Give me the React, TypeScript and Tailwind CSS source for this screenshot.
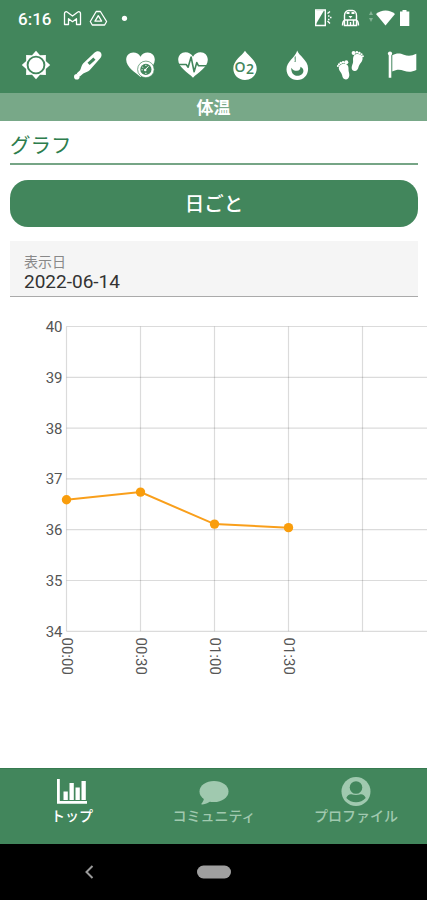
import React from 'react';

const GREEN = '#42865c';

const SunIcon = () => (
  <svg viewBox="0 0 32 32" className="h-8 w-8" fill="white">
    <path d="M16 1.800l4 4.400 5.900-.1-.1 5.900 4.400 4-4.400 4 .1 5.900-5.900-.1-4 4.400-4-4.400-5.900.1.100-5.900-4.400-4 4.400-4-.1-5.900 5.900.1z" />
    <circle cx="16" cy="16" r="8.400" stroke={GREEN} strokeWidth="1.900" />
  </svg>
);

const ThermometerIcon = () => (
  <svg viewBox="0 0 32 32" className="h-8 w-8" fill="none">
    <path d="M22.1 3.9c2.2-2 4.800-2.200 6.400-.6 1.600 1.700 1.400 4.200-.5 6.300L17.600 21.200c-1.500 1.600-4.300 1.900-6.300 3.200l-3.500 3.200-3.200-3.200 3.500-3.200c1.400-2.200 1.300-5 3-6.600z" fill="white" />
    <circle cx="4.800" cy="27.700" r="2.800" fill="white" />
    <path d="M16.600 14.900l5.800-5.300" stroke={GREEN} strokeWidth="3.200" />
  </svg>
);

const HeartGaugeIcon = () => (
  <svg viewBox="0 0 32 32" className="h-8 w-8">
    <path d="M15.500 28C11 23.800 1.200 18.500 1.200 10.800 1.200 6.500 4.300 3.500 8.300 3.500c3.100 0 5.600 1.400 7.200 4.200 1.600-2.800 4.100-4.200 7.200-4.200 4 0 7.100 3 7.100 7.300C29.800 18.500 20 23.800 15.500 28z" fill="white" />
    <circle cx="20.900" cy="20.400" r="8.300" fill="white" stroke={GREEN} strokeWidth=".7" />
    <circle cx="20.900" cy="20.400" r="5.600" fill={GREEN} />
    <path d="M19.500 21.500l4-4.200M17.300 18l1 .6M20.900 15.800V17M20.900 23.800V25M16.500 20.800h1.200" stroke="white" strokeWidth="1" fill="none" />
    <circle cx="20.300" cy="21" r="1.200" fill="white" />
  </svg>
);

const HeartPulseIcon = () => (
  <svg viewBox="0 0 32 32" className="h-8 w-8" fill="none">
    <path d="M16 28.700C11.500 24 1.200 18.500 1.200 10.800 1.200 6.300 4.400 3.200 8.500 3.200c3.200 0 5.900 1.600 7.500 4.500 1.600-2.900 4.300-4.500 7.500-4.500 4.100 0 7.300 3.100 7.300 7.600C30.800 18.500 20.500 24 16 28.700z" fill="white" />
    <path d="M2 15.500h7.200l1.900 2.700 3-10.200 3 14.800 2.700-9.300 1.600 3.200H30" stroke={GREEN} strokeWidth="1.600" strokeLinejoin="round" />
  </svg>
);

const OxygenIcon = () => (
  <svg viewBox="0 0 32 32" className="h-8 w-8">
    <path d="M16 1.800c2.800 4.800 11.700 9.500 11.700 17.700C27.700 26 22.600 31 16 31S4.300 26 4.300 19.500C4.300 11.300 13.200 6.600 16 1.800z" fill="white" />
    <g fill={GREEN} fontSize="14" fontWeight="600" className="font-['Open_Sans',sans-serif]">
      <text x="5.500" y="22.500">O</text>
      <text x="17" y="25">2</text>
    </g>
  </svg>
);

const FlameIcon = () => (
  <svg viewBox="0 0 32 32" className="h-8 w-8" fill="none">
    <path d="M16.200 1.500c1.200 4.900 10.900 9.500 10.900 18.200C27.100 26.200 22.600 31 16.200 31 10 31 5.500 26.400 5.500 20.200c0-7.500 8.900-12 10.700-18.700z" fill="white" />
    <path d="M14.300 7.500c-.6 2 .5 3.500-.3 5.500" stroke={GREEN} strokeWidth="1" />
    <path d="M10.300 18.700c1.500 2.400 3.500 3.200 5.700 3.100 2.200-.2 3.400-1.600 3.500-4.100 2.200 1.200 3.100 2.700 2.900 4.500-.3 2.700-2.800 4.600-6 4.600-3.700 0-6.500-3.100-6.100-8.100z" fill={GREEN} />
  </svg>
);

const FootstepsIcon = () => (
  <svg viewBox="0 0 32 32" className="h-8 w-8" fill="white">
    <path d="M5 17.700c1-2.500 4.300-3.700 6.900-2.700 2.500 1 2.700 3.300 2.600 5.600-.1 2 1.100 4 .8 6.200-.3 2.200-1.700 3.700-3.500 3.700-2.300 0-3.300-1.700-3.600-3.900-.4-3.200-4.400-5.700-3.200-8.900z" />
    <circle cx="12.300" cy="13.200" r="2" />
    <circle cx="9.100" cy="13.200" r="1.300" />
    <circle cx="6.800" cy="14" r="1.200" />
    <circle cx="5" cy="15.400" r="1.100" />
    <circle cx="3.900" cy="17.100" r="1" />
    <path d="M19.700 7c1.500-2.300 5-2.500 7.100-1 2.200 1.500 2.200 4.100 1.100 6.200-1 1.900-2.700 3.100-3.300 5.500-.6 2.700-2 4.600-4.300 4.200-2.200-.3-3-2.300-2.500-4.500.5-2.100 1.400-3.400 1.300-5.500-.1-1.600-.2-3.400.6-4.900z" />
    <circle cx="19.600" cy="3.900" r="2" />
    <circle cx="22.900" cy="3.200" r="1.300" />
    <circle cx="25.400" cy="3.900" r="1.200" />
    <circle cx="27.500" cy="5.300" r="1.100" />
    <circle cx="28.900" cy="7.200" r="1" />
  </svg>
);

const FlagIcon = () => (
  <svg viewBox="0 0 32 32" className="h-8 w-8" fill="white">
    <circle cx="4" cy="4.600" r="2.100" />
    <path d="M2.700 4.500h2.600v24.300H2.700zM6.300 6.300c4.600-2.800 8.100-1.900 11.500-.6 4.200 1.600 8.100 1.300 12.500-.9v16.100c-4.400 2.100-8.300 2.200-12.500.8-3.500-1.200-6.900-1.600-11.500.8z" />
  </svg>
);

const categories = [SunIcon, ThermometerIcon, HeartGaugeIcon, HeartPulseIcon, OxygenIcon, FlameIcon, FootstepsIcon, FlagIcon];

const StatusBar = () => (
  <div className="flex h-9 items-center justify-between pr-[17px] pl-[18px] text-white">
    <div className="flex items-center">
      <span className="w-[45px] pt-0.5 font-['Roboto',sans-serif] text-[17px] leading-none font-medium">6:16</span>
      <svg width="66" height="18" viewBox="0 0 66 18" fill="none" stroke="white" strokeWidth="1.300" strokeLinejoin="round">
        <path d="M1.500 15.500V4.500c0-1.800 1.800-2.300 3-1.300L9.500 7l5-3.800c1.200-1 3-.5 3 1.300v11h-4V9.700l-4 3-4-3v5.800z" />
        <path d="M33.200 2.500h4.200l6.200 10-2 3.500H29.300l-2-3.500zM35.300 6.700l3.300 5.500H32z" />
        <circle cx="61.500" cy="9.300" r="2.600" fill="white" stroke="none" />
      </svg>
    </div>
    <svg width="96" height="20" viewBox="0 0 96 20" fill="none" stroke="white" strokeWidth="1.400">
      <path d="M1.700 2h9.600v15.500H1.700z" />
      <path d="M2 2.500h8L2 16z" fill="white" stroke="none" />
      <path d="M13.500 5.500l2.500-2M14 8h1.500M16 9.500h1.500M14 11.500h1.500M13.500 13l2.500 2.500" />
      <path d="M30.500 17.500V7.500c0-3 2-5 4-5h4c2 0 4 2 4 5v10zM30.500 12c-1.500 1-2 3-2 5.500M42.500 12c1.500 1 2 3 2 5.500M33.500 12.500v5M36.500 14v3.500M39.500 12.500v5M31 12h11" />
      <path d="M32.500 4h3v2h-3zM37.500 4h3v2h-3zM34.500 8h4l-2 2.500z" fill="white" stroke="none" />
      <g stroke="none">
        <path d="M57 3l2 4h-4zM57 14l2-4h-4z" fill="#83b294" />
        <path d="M62 6c5-4.700 14.200-4.700 19 0l-9.500 11.500z" fill="white" />
        <path d="M86 3.500h2.500V2h4v1.500h2.800V18H86z" fill="white" />
      </g>
    </svg>
  </div>
);

const LEFT = 66.5;
const TOP = 16.5;
const STEP_X = 74;
const STEP_Y = 50.8;
const ticks = [40, 39, 38, 37, 36, 35, 34];
const readings = [
  { time: '00:00', value: 36.59 },
  { time: '00:30', value: 36.74 },
  { time: '01:00', value: 36.11 },
  { time: '01:30', value: 36.04 },
];
const toX = (i: number) => LEFT + i * STEP_X;
const toY = (value: number) => TOP + (40 - value) * STEP_Y;

const TemperatureChart: React.FC = () => (
  <svg width="427" height="380" viewBox="0 0 427 380" className="block font-['Roboto',sans-serif] text-[15px]">
    <g stroke="#000" strokeOpacity=".14" strokeWidth="1.200" fill="none">
      {ticks.map((tick) => (
        <line key={tick} x1={LEFT} x2="427" y1={toY(tick)} y2={toY(tick)} />
      ))}
      {[0, 1, 2, 3, 4].map((i) => (
        <line key={i} x1={toX(i)} x2={toX(i)} y1={TOP} y2={toY(34)} />
      ))}
    </g>
    <g fill="#555">
      {ticks.map((tick) => (
        <text key={tick} x="62.500" y={toY(tick) + 5.5} textAnchor="end">{tick}</text>
      ))}
      {readings.map((r, i) => (
        <text key={r.time} transform={`translate(${toX(i) - 5} 327.500) rotate(90)`}>{r.time}</text>
      ))}
    </g>
    <polyline
      points={readings.map((r, i) => `${toX(i)},${toY(r.value)}`).join(' ')}
      fill="none"
      stroke="#f99f1b"
      strokeWidth="2"
    />
    {readings.map((r, i) => (
      <circle key={r.time} cx={toX(i)} cy={toY(r.value)} r="4.700" fill="#f99d0c" />
    ))}
  </svg>
);

const BottomNav = () => (
  <nav className="grid h-[76px] grid-cols-3 border-t border-[#367a50] bg-[#42865c] pl-px text-[14px] leading-5 font-medium text-[#a0c9af]">
    <div className="flex flex-col items-center pt-[7px] text-white">
      <svg width="32" height="29" viewBox="0 0 32 29" fill="currentColor">
        <path d="M1 3h2.800v22H31v2.700H1zM7.500 15.500h4.300V24H7.500zM13.500 7h4.300v17h-4.300zM19.500 11.500h4.300V24h-4.300zM25.500 5h4.300v19h-4.300z" />
      </svg>
      <span>トップ</span>
    </div>
    <div className="flex flex-col items-center pt-[7px]">
      <svg width="32" height="29" viewBox="0 0 32 29" fill="currentColor">
        <ellipse cx="16" cy="15.500" rx="14.500" ry="10.500" />
        <path d="M6 20c.5 3.500-1 6-3 8.300 4 .5 7.500-1.300 9.500-3.300z" />
      </svg>
      <span>コミュニティ</span>
    </div>
    <div className="flex flex-col items-center pt-[7px]">
      <svg width="32" height="29" viewBox="0 0 32 29" className="overflow-visible">
        <circle cx="16" cy="15.500" r="14.500" fill="currentColor" />
        <circle cx="16" cy="11.500" r="6.300" fill={GREEN} />
        <path d="M6.300 22c.8-2.600 3-4 5-3.800 3 .9 6.400.9 9.400 0 2-.2 4.200 1.200 5 3.800C21 27.700 11 27.700 6.300 22z" fill={GREEN} />
      </svg>
      <span>プロファイル</span>
    </div>
  </nav>
);

const App: React.FC = () => {
  return (
    <div className="flex h-[900px] w-[427px] flex-col overflow-hidden bg-white font-['Noto_Sans_CJK_JP',sans-serif]">
      <header className="h-[93px] shrink-0 bg-[#42865c]">
        <StatusBar />
        <div className="ml-5 grid w-[418px] grid-cols-8 pt-[12.500px]">
          {categories.map((Icon, i) => (
            <Icon key={i} />
          ))}
        </div>
      </header>
      <div className="flex h-7 shrink-0 items-center justify-center bg-[#78a888] text-[17px] font-bold text-white">体温</div>
      <main className="flex-1">
        <div className="pr-[9px] pl-[10px]">
          <h1 className="h-[44px] border-b-2 border-[#76a586] pt-2 text-[20.500px] leading-[30px] text-[#2d7d4d]">グラフ</h1>
          <button className="mt-[15px] flex h-[47px] w-full items-center justify-center rounded-[18px] bg-[#42865c] pb-0.5 text-[19.500px] font-medium text-white">
            日ごと
          </button>
          <div className="mt-[14px] h-[56px] border-b border-[#aaa] bg-[#f5f5f5] pt-[11px] pl-[14px]">
            <div className="text-[14px] leading-[18px] text-[#888]">表示日</div>
            <div className="font-['Roboto',sans-serif] text-[19px] leading-[23px] text-[#333]">2022-06-14</div>
          </div>
        </div>
        <div className="mt-[13px]">
          <TemperatureChart />
        </div>
      </main>
      <BottomNav />
      <div className="flex h-14 shrink-0 items-center bg-black">
        <svg width="427" height="20" viewBox="0 0 427 20">
          <path d="M92.500 4l-6 6 6 6" fill="none" stroke="#9b9b9b" strokeWidth="2" />
          <rect x="197" y="3.500" width="34" height="13" rx="6.500" fill="#9f9f9f" />
        </svg>
      </div>
    </div>
  );
};

export default App;
